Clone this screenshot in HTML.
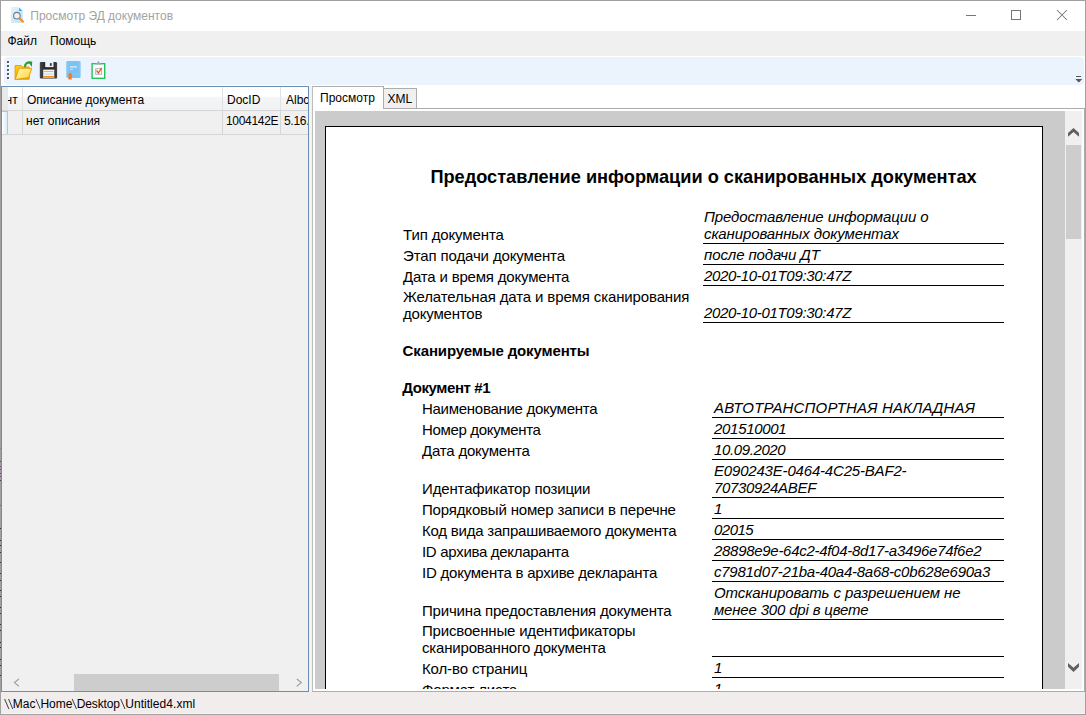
<!DOCTYPE html>
<html><head><meta charset="utf-8"><title>Просмотр ЭД документов</title>
<style>
html,body{margin:0;padding:0;}
body{width:1086px;height:715px;position:relative;overflow:hidden;background:#ffffff;font-family:"Liberation Sans", sans-serif;color:#000;}
</style></head><body>
<svg style="position:absolute;left:10px;top:6px" width="16" height="18" viewBox="0 0 16 18">
<defs><linearGradient id="ig" x1="0" y1="0" x2="1" y2="1"><stop offset="0" stop-color="#e3f3fd"/><stop offset="1" stop-color="#bfe3fa"/></linearGradient></defs>
<path d="M1 1 H9 L13 5 V17 H1 Z" fill="url(#ig)"/>
<path d="M9.2 1.8 L12.4 5 H9.2 Z" fill="#2ba4ee"/>
<circle cx="6.9" cy="9.7" r="3.3" fill="#f0f0f0" stroke="#6f7f8b" stroke-width="1.1"/>
<path d="M9.6 12.4 L13.6 16.2" stroke="#f7931e" stroke-width="2.2"/>
</svg><div style="position:absolute;left:30.3px;top:8.84px;white-space:nowrap;font-size:12px;line-height:14px;color:#a3a3a3;">Просмотр ЭД документов</div><div style="position:absolute;left:966px;top:15px;width:10px;height:1px;background:#767676"></div><div style="position:absolute;left:1011px;top:10px;width:8px;height:8px;border:1px solid #767676"></div><svg style="position:absolute;left:1056px;top:9px" width="12" height="12" viewBox="0 0 12 12">
<path d="M1 1 L11 11 M11 1 L1 11" stroke="#767676" stroke-width="1.05"/></svg><div style="position:absolute;left:1px;top:31px;width:1084px;height:25px;background:#f0f0f0"></div><div style="position:absolute;left:7.5px;top:33.84px;white-space:nowrap;font-size:12px;line-height:14px;color:#000;">Файл</div><div style="position:absolute;left:50px;top:33.84px;white-space:nowrap;font-size:12px;line-height:14px;color:#000;">Помощь</div><div style="position:absolute;left:4px;top:57px;width:1080px;height:28px;background:#ebf3fc;border-radius:4px"></div><div style="position:absolute;left:8px;top:62px;width:2px;height:2px;background:#ffffff"></div><div style="position:absolute;left:7px;top:61px;width:2px;height:2px;background:#555a60"></div><div style="position:absolute;left:8px;top:66px;width:2px;height:2px;background:#ffffff"></div><div style="position:absolute;left:7px;top:65px;width:2px;height:2px;background:#555a60"></div><div style="position:absolute;left:8px;top:70px;width:2px;height:2px;background:#ffffff"></div><div style="position:absolute;left:7px;top:69px;width:2px;height:2px;background:#555a60"></div><div style="position:absolute;left:8px;top:74px;width:2px;height:2px;background:#ffffff"></div><div style="position:absolute;left:7px;top:73px;width:2px;height:2px;background:#555a60"></div><div style="position:absolute;left:8px;top:78px;width:2px;height:2px;background:#ffffff"></div><div style="position:absolute;left:7px;top:77px;width:2px;height:2px;background:#555a60"></div><div style="position:absolute;left:1076px;top:76px;width:5px;height:1px;background:#555"></div><svg style="position:absolute;left:1075px;top:79px" width="8" height="4" viewBox="0 0 8 4"><path d="M0.3 0 H7.3 L3.8 3.5 Z" fill="#555"/></svg><svg style="position:absolute;left:14px;top:60px" width="20" height="21" viewBox="0 0 20 21">
<defs><linearGradient id="fg1" x1="0" y1="0" x2="0" y2="1"><stop offset="0" stop-color="#ffcf1f"/><stop offset="1" stop-color="#f2ae00"/></linearGradient>
<linearGradient id="fg2" x1="0" y1="0" x2="1" y2="1"><stop offset="0" stop-color="#fff7b8"/><stop offset="1" stop-color="#ffd43a"/></linearGradient></defs>
<path d="M1.1 5.6 H7.4 L8.7 7 H15.2 V19.3 H1.1 Z" fill="url(#fg1)" stroke="#e39b00" stroke-width="0.9"/>
<path d="M5 8.3 H17.8 L14.6 17.6 L1.1 19.5 Z" fill="url(#fg2)" stroke="#e39b00" stroke-width="0.9"/>
<path d="M10.9 7.2 C10.9 3.6 13.2 1.9 15.9 3.1" stroke="#3aa334" stroke-width="2.3" fill="none"/>
<path d="M13.8 1.2 L18.2 1.6 L17.9 7 Z" fill="#2f9a2c"/>
</svg><svg style="position:absolute;left:39px;top:61px" width="19" height="18" viewBox="0 0 19 18">
<defs><linearGradient id="flg" x1="0" y1="0" x2="1" y2="0"><stop offset="0" stop-color="#4a4a4a"/><stop offset="0.25" stop-color="#2b2b2b"/><stop offset="0.8" stop-color="#2b2b2b"/><stop offset="1" stop-color="#444"/></linearGradient></defs>
<path d="M1.8 0.9 H16.8 Q18.1 0.9 18.1 2.2 V16.4 Q18.1 17.4 17.1 17.4 H1.8 Q0.8 17.4 0.8 16.4 V1.9 Q0.8 0.9 1.8 0.9 Z" fill="url(#flg)"/>
<rect x="6.2" y="0.9" width="8.3" height="5.2" fill="#f2f2f2"/>
<rect x="10.9" y="2.1" width="1.8" height="2.8" fill="#3a3a3a"/>
<rect x="4.2" y="8.6" width="11.1" height="8.3" fill="#f4f4f4"/>
<rect x="5" y="10.2" width="9.5" height="0.8" fill="#9fb0c8"/>
<rect x="5" y="12.6" width="9.5" height="1" fill="#d0d3da"/>
<rect x="4.2" y="15" width="11.1" height="1.7" fill="#f5901a"/>
</svg><svg style="position:absolute;left:66px;top:60px" width="16" height="21" viewBox="0 0 16 21">
<rect x="0.3" y="0.9" width="14.3" height="17" rx="1.4" fill="#7cc3f3"/>
<path d="M1.9 1 V14.4 H13.3 V1" fill="none" stroke="#8ccbf5" stroke-width="0.8"/>
<rect x="4" y="6" width="7" height="1.7" fill="#c4e3fa"/>
<rect x="4" y="8.9" width="2.9" height="1" fill="#c4e3fa"/>
<path d="M3 15.5 L2.4 20 L4.1 19 L5.6 20 L5.3 15.5 Z" fill="#ff6a14"/>
<circle cx="4.1" cy="15" r="2.1" fill="#ff7a22"/>
</svg><svg style="position:absolute;left:91px;top:60px" width="16" height="21" viewBox="0 0 16 21">
<rect x="1.1" y="3.7" width="12.6" height="14.6" fill="#ffffff" stroke="#21c25e" stroke-width="1.4"/>
<path d="M4.4 4.5 H10.4 V3.4 L8.7 2.9 L7.4 0.8 L6.1 2.9 L4.4 3.4 Z" fill="#9aa8b4"/>
<rect x="4.7" y="8.7" width="5.9" height="5.6" fill="none" stroke="#aab4bc" stroke-width="1"/>
<path d="M5.6 10.5 L7.4 13 L10.6 7.8" fill="none" stroke="#f2592a" stroke-width="1.4"/>
</svg><div style="position:absolute;left:1px;top:86px;width:308px;height:606px;box-sizing:border-box;border:1px solid #6a8eb4;background:#f0f0f0"></div><div style="position:absolute;left:2px;top:87px;width:306px;height:23px;background:linear-gradient(#ffffff 0px,#ffffff 9px,#f4f5f7 11px,#f0f1f3 23px)"></div><div style="position:absolute;left:2px;top:87px;width:6px;height:23px;background:#e9e9eb"></div><div style="position:absolute;left:2px;top:110px;width:306px;height:1px;background:#d5d5d5"></div><div style="position:absolute;left:22px;top:87px;width:1px;height:23px;background:#e2e2e4"></div><div style="position:absolute;left:222px;top:87px;width:1px;height:23px;background:#e2e2e4"></div><div style="position:absolute;left:280px;top:87px;width:1px;height:23px;background:#e2e2e4"></div><div style="position:absolute;left:8px;top:87px;width:14px;height:23px;overflow:hidden"><div style="position:absolute;left:-2.5px;top:5.84px;white-space:nowrap;font-size:12px;line-height:14px;color:#000;">нт</div></div><div style="position:absolute;left:27px;top:92.84px;white-space:nowrap;font-size:12px;line-height:14px;color:#000;">Описание документа</div><div style="position:absolute;left:227px;top:92.84px;white-space:nowrap;font-size:12px;line-height:14px;color:#000;">DocID</div><div style="position:absolute;left:286px;top:92.84px;white-space:nowrap;font-size:12px;line-height:14px;color:#000;width:22px;overflow:hidden">Albc</div><div style="position:absolute;left:2px;top:111px;width:306px;height:23px;background:#f0f0f0"></div><div style="position:absolute;left:2px;top:111px;width:6px;height:24px;box-sizing:border-box;border:1px solid #8fd2fb;border-left:none;background:linear-gradient(90deg,#ffffff,#d9edf9)"></div><div style="position:absolute;left:2px;top:134px;width:306px;height:1px;background:#d6d6d6"></div><div style="position:absolute;left:22px;top:111px;width:1px;height:23px;background:#d6d6d6"></div><div style="position:absolute;left:222px;top:111px;width:1px;height:23px;background:#d6d6d6"></div><div style="position:absolute;left:280px;top:111px;width:1px;height:23px;background:#d6d6d6"></div><div style="position:absolute;left:26px;top:113.84px;white-space:nowrap;font-size:12px;line-height:14px;color:#000;">нет описания</div><div style="position:absolute;left:226px;top:113.84px;white-space:nowrap;font-size:12px;line-height:14px;color:#000;letter-spacing:-0.3px">1004142E</div><div style="position:absolute;left:284px;top:113.84px;white-space:nowrap;font-size:12px;line-height:14px;color:#000;width:24px;overflow:hidden;letter-spacing:-0.3px">5.16.</div><div style="position:absolute;left:2px;top:674px;width:306px;height:17px;background:#f0f0f0"></div><div style="position:absolute;left:74px;top:674px;width:205px;height:17px;background:#cdcdcd"></div><svg style="position:absolute;left:10px;top:675px" width="14" height="14" viewBox="10 675 14 14"><path d="M18.9 679 L14.4 682.6 L18.9 686.2" fill="none" stroke="#a0a0a0" stroke-width="1.2"/></svg><svg style="position:absolute;left:292px;top:675px" width="14" height="14" viewBox="292 675 14 14"><path d="M296.8 679 L301.3 682.6 L296.8 686.2" fill="none" stroke="#a0a0a0" stroke-width="1.2"/></svg><div style="position:absolute;left:309px;top:86px;width:3px;height:606px;background:#f2f2f2"></div><div style="position:absolute;left:312px;top:108px;width:773px;height:584px;box-sizing:border-box;border:1px solid #adadad;border-left-color:#bdbdbd;background:#ffffff"></div><div style="position:absolute;left:383px;top:88px;width:34px;height:21px;box-sizing:border-box;border:1px solid #adadad;background:#f0f0f0"></div><div style="position:absolute;left:387.5px;top:91.84px;white-space:nowrap;font-size:12px;line-height:14px;color:#000;">XML</div><div style="position:absolute;left:312px;top:86px;width:72px;height:23px;box-sizing:border-box;border:1px solid #adadad;border-left-color:#bdbdbd;border-bottom:none;background:#ffffff"></div><div style="position:absolute;left:320px;top:90.84px;white-space:nowrap;font-size:12px;line-height:14px;color:#000;">Просмотр</div><div style="position:absolute;left:315px;top:111px;width:750px;height:578px;background:#cbcbcb"></div><div style="position:absolute;left:1065px;top:111px;width:17px;height:578px;background:#f0f0f0"></div><div style="position:absolute;left:1066px;top:145px;width:15px;height:94px;background:#cdcdcd"></div><svg style="position:absolute;left:1065px;top:125px" width="17" height="14" viewBox="1065 125 17 14"><path d="M1068 132.9 L1073.5 127.9 L1079 132.9 V136.8 L1073.5 132.1 L1068 136.8 Z" fill="#606060"/></svg><svg style="position:absolute;left:1065px;top:660px" width="17" height="14" viewBox="1065 660 17 14"><path d="M1068 662.9 L1073.5 667.7 L1079 662.9 V666.8 L1073.5 672 L1068 666.8 Z" fill="#606060"/></svg><div style="position:absolute;left:315px;top:111px;width:750px;height:578px;overflow:hidden"><div style="position:absolute;left:-315px;top:-111px;width:1086px;height:715px"><div style="position:absolute;left:325px;top:126px;width:718px;height:563px;box-sizing:border-box;border:1px solid #000;border-bottom:none;background:#fff"></div><div style="position:absolute;left:430.4px;top:167.19px;white-space:nowrap;font-size:18.2px;line-height:21px;color:#000;font-weight:bold">Предоставление информации о сканированных документах</div><div style="position:absolute;left:403px;top:226.30px;white-space:nowrap;font-size:15px;line-height:17px;color:#000;letter-spacing:-0.125px">Тип документа</div><div style="position:absolute;left:704px;top:208.30px;white-space:nowrap;font-size:15px;line-height:17px;color:#000;font-style:italic;letter-spacing:-0.119px">Предоставление информации о</div><div style="position:absolute;left:704px;top:225.30px;white-space:nowrap;font-size:15px;line-height:17px;color:#000;font-style:italic;letter-spacing:-0.109px">сканированных документах</div><div style="position:absolute;left:703px;top:243px;width:301px;height:1px;background:#000"></div><div style="position:absolute;left:403px;top:247.30px;white-space:nowrap;font-size:15px;line-height:17px;color:#000;letter-spacing:-0.125px">Этап подачи документа</div><div style="position:absolute;left:704px;top:246.30px;white-space:nowrap;font-size:15px;line-height:17px;color:#000;font-style:italic;letter-spacing:-0.107px">после подачи ДТ</div><div style="position:absolute;left:703px;top:264px;width:301px;height:1px;background:#000"></div><div style="position:absolute;left:403px;top:268.30px;white-space:nowrap;font-size:15px;line-height:17px;color:#000;letter-spacing:-0.186px">Дата и время документа</div><div style="position:absolute;left:704px;top:267.30px;white-space:nowrap;font-size:15px;line-height:17px;color:#000;font-style:italic;letter-spacing:-0.321px">2020-10-01T09:30:47Z</div><div style="position:absolute;left:703px;top:285px;width:301px;height:1px;background:#000"></div><div style="position:absolute;left:403px;top:288.30px;white-space:nowrap;font-size:15px;line-height:17px;color:#000;letter-spacing:-0.131px">Желательная дата и время сканирования</div><div style="position:absolute;left:403px;top:305.30px;white-space:nowrap;font-size:15px;line-height:17px;color:#000;letter-spacing:-0.178px">документов</div><div style="position:absolute;left:704px;top:304.30px;white-space:nowrap;font-size:15px;line-height:17px;color:#000;font-style:italic;letter-spacing:-0.321px">2020-10-01T09:30:47Z</div><div style="position:absolute;left:703px;top:322px;width:301px;height:1px;background:#000"></div><div style="position:absolute;left:402.6px;top:342.30px;white-space:nowrap;font-size:15px;line-height:17px;color:#000;font-weight:bold;letter-spacing:-0.13px">Сканируемые документы</div><div style="position:absolute;left:402.3px;top:379.30px;white-space:nowrap;font-size:15px;line-height:17px;color:#000;font-weight:bold;letter-spacing:-0.42px">Документ #1</div><div style="position:absolute;left:422px;top:400.30px;white-space:nowrap;font-size:15px;line-height:17px;color:#000;letter-spacing:-0.276px">Наименование документа</div><div style="position:absolute;left:714px;top:399.30px;white-space:nowrap;font-size:15px;line-height:17px;color:#000;font-style:italic;letter-spacing:0.156px">АВТОТРАНСПОРТНАЯ НАКЛАДНАЯ</div><div style="position:absolute;left:712px;top:417px;width:292px;height:1px;background:#000"></div><div style="position:absolute;left:422px;top:421.30px;white-space:nowrap;font-size:15px;line-height:17px;color:#000;letter-spacing:-0.329px">Номер документа</div><div style="position:absolute;left:714px;top:420.30px;white-space:nowrap;font-size:15px;line-height:17px;color:#000;font-style:italic;letter-spacing:-0.300px">201510001</div><div style="position:absolute;left:712px;top:438px;width:292px;height:1px;background:#000"></div><div style="position:absolute;left:422px;top:442.30px;white-space:nowrap;font-size:15px;line-height:17px;color:#000;letter-spacing:-0.200px">Дата документа</div><div style="position:absolute;left:714px;top:441.30px;white-space:nowrap;font-size:15px;line-height:17px;color:#000;font-style:italic;letter-spacing:-0.378px">10.09.2020</div><div style="position:absolute;left:712px;top:459px;width:292px;height:1px;background:#000"></div><div style="position:absolute;left:422px;top:480.30px;white-space:nowrap;font-size:15px;line-height:17px;color:#000;letter-spacing:-0.140px">Идентафикатор позиции</div><div style="position:absolute;left:714px;top:462.30px;white-space:nowrap;font-size:15px;line-height:17px;color:#000;font-style:italic;letter-spacing:-0.183px">E090243E-0464-4C25-BAF2-</div><div style="position:absolute;left:714px;top:479.30px;white-space:nowrap;font-size:15px;line-height:17px;color:#000;font-style:italic;letter-spacing:-0.327px">70730924ABEF</div><div style="position:absolute;left:712px;top:497px;width:292px;height:1px;background:#000"></div><div style="position:absolute;left:422px;top:501.30px;white-space:nowrap;font-size:15px;line-height:17px;color:#000;letter-spacing:-0.169px">Порядковый номер записи в перечне</div><div style="position:absolute;left:714px;top:500.30px;white-space:nowrap;font-size:15px;line-height:17px;color:#000;font-style:italic;letter-spacing:-0.150px">1</div><div style="position:absolute;left:712px;top:518px;width:292px;height:1px;background:#000"></div><div style="position:absolute;left:422px;top:522.30px;white-space:nowrap;font-size:15px;line-height:17px;color:#000;letter-spacing:-0.222px">Код вида запрашиваемого документа</div><div style="position:absolute;left:714px;top:521.30px;white-space:nowrap;font-size:15px;line-height:17px;color:#000;font-style:italic;letter-spacing:-0.525px">02015</div><div style="position:absolute;left:712px;top:539px;width:292px;height:1px;background:#000"></div><div style="position:absolute;left:422px;top:543.30px;white-space:nowrap;font-size:15px;line-height:17px;color:#000;letter-spacing:-0.300px">ID архива декларанта</div><div style="position:absolute;left:714px;top:542.30px;white-space:nowrap;font-size:15px;line-height:17px;color:#000;font-style:italic;letter-spacing:-0.291px">28898e9e-64c2-4f04-8d17-a3496e74f6e2</div><div style="position:absolute;left:712px;top:560px;width:292px;height:1px;background:#000"></div><div style="position:absolute;left:422px;top:564.30px;white-space:nowrap;font-size:15px;line-height:17px;color:#000;letter-spacing:-0.226px">ID документа в архиве декларанта</div><div style="position:absolute;left:714px;top:563.30px;white-space:nowrap;font-size:15px;line-height:17px;color:#000;font-style:italic;letter-spacing:-0.257px">c7981d07-21ba-40a4-8a68-c0b628e690a3</div><div style="position:absolute;left:712px;top:581px;width:292px;height:1px;background:#000"></div><div style="position:absolute;left:422px;top:602.30px;white-space:nowrap;font-size:15px;line-height:17px;color:#000;letter-spacing:-0.184px">Причина предоставления документа</div><div style="position:absolute;left:714px;top:584.30px;white-space:nowrap;font-size:15px;line-height:17px;color:#000;font-style:italic;letter-spacing:-0.079px">Отсканировать с разрешением не</div><div style="position:absolute;left:714px;top:601.30px;white-space:nowrap;font-size:15px;line-height:17px;color:#000;font-style:italic;letter-spacing:-0.175px">менее 300 dpi в цвете</div><div style="position:absolute;left:712px;top:619px;width:292px;height:1px;background:#000"></div><div style="position:absolute;left:422px;top:622.30px;white-space:nowrap;font-size:15px;line-height:17px;color:#000;letter-spacing:-0.184px">Присвоенные идентификаторы</div><div style="position:absolute;left:422px;top:639.30px;white-space:nowrap;font-size:15px;line-height:17px;color:#000;letter-spacing:-0.178px">сканированного документа</div><div style="position:absolute;left:712px;top:656px;width:292px;height:1px;background:#000"></div><div style="position:absolute;left:422px;top:660.30px;white-space:nowrap;font-size:15px;line-height:17px;color:#000;letter-spacing:-0.131px">Кол-во страниц</div><div style="position:absolute;left:714px;top:659.30px;white-space:nowrap;font-size:15px;line-height:17px;color:#000;font-style:italic;letter-spacing:-0.150px">1</div><div style="position:absolute;left:712px;top:677px;width:292px;height:1px;background:#000"></div><div style="position:absolute;left:422px;top:681.30px;white-space:nowrap;font-size:15px;line-height:17px;color:#000;letter-spacing:-0.170px">Формат листа</div><div style="position:absolute;left:714px;top:680.30px;white-space:nowrap;font-size:15px;line-height:17px;color:#000;font-style:italic;letter-spacing:-0.150px">1</div><div style="position:absolute;left:712px;top:698px;width:292px;height:1px;background:#000"></div></div></div><div style="position:absolute;left:1px;top:692px;width:1084px;height:22px;background:#f0edec"></div><div style="position:absolute;left:1px;top:713px;width:1084px;height:1px;background:#f9f7f7"></div><div style="position:absolute;left:12.8px;top:696.84px;white-space:nowrap;font-size:12px;line-height:14px;color:#000;">Mac</div><div style="position:absolute;left:40.4px;top:696.84px;white-space:nowrap;font-size:12px;line-height:14px;color:#000;">Home</div><div style="position:absolute;left:76.8px;top:696.84px;white-space:nowrap;font-size:12px;line-height:14px;color:#000;letter-spacing:-0.15px">Desktop</div><div style="position:absolute;left:125.2px;top:696.84px;white-space:nowrap;font-size:12px;line-height:14px;color:#000;letter-spacing:0.05px">Untitled4.xml</div><svg style="position:absolute;left:0;top:694px" width="130" height="20" viewBox="0 694 130 20"><path d="M4.6 699 L8.9 709 M8.6 699 L12.8 709 M35.9 699 L40.2 709 M72.2 699 L76.5 709 M120.7 699 L125 709" stroke="#2a2a2a" stroke-width="0.9" fill="none"/></svg><div style="position:absolute;left:0px;top:0px;width:1086px;height:1px;background:#a0a0a0"></div><div style="position:absolute;left:0px;top:0px;width:1px;height:715px;background:#a0a0a0"></div><div style="position:absolute;left:1085px;top:0px;width:1px;height:715px;background:#a0a0a0"></div><div style="position:absolute;left:0px;top:714px;width:1086px;height:1px;background:#a0a0a0"></div><div style="position:absolute;left:0px;top:448px;width:1px;height:1px;background:#888"></div><div style="position:absolute;left:0px;top:461px;width:1px;height:1px;background:#555"></div><div style="position:absolute;left:0px;top:466px;width:1px;height:1px;background:#7a4a8a"></div><div style="position:absolute;left:0px;top:469px;width:1px;height:1px;background:#7a4a8a"></div><div style="position:absolute;left:0px;top:473px;width:1px;height:1px;background:#7a4a8a"></div><div style="position:absolute;left:0px;top:476px;width:1px;height:1px;background:#7a4a8a"></div><div style="position:absolute;left:0px;top:480px;width:1px;height:1px;background:#444"></div><div style="position:absolute;left:0px;top:505px;width:1px;height:1px;background:#5a7a5a"></div><div style="position:absolute;left:0px;top:528px;width:1px;height:1px;background:#333"></div><div style="position:absolute;left:0px;top:540px;width:1px;height:1px;background:#333"></div><div style="position:absolute;left:0px;top:545px;width:1px;height:1px;background:#333"></div><div style="position:absolute;left:0px;top:552px;width:1px;height:1px;background:#333"></div><div style="position:absolute;left:0px;top:562px;width:1px;height:1px;background:#333"></div><div style="position:absolute;left:0px;top:573px;width:1px;height:1px;background:#333"></div><div style="position:absolute;left:0px;top:580px;width:1px;height:1px;background:#333"></div><div style="position:absolute;left:0px;top:590px;width:1px;height:1px;background:#333"></div><div style="position:absolute;left:0px;top:596px;width:1px;height:1px;background:#333"></div><div style="position:absolute;left:0px;top:607px;width:1px;height:1px;background:#333"></div><div style="position:absolute;left:0px;top:613px;width:1px;height:1px;background:#333"></div><div style="position:absolute;left:0px;top:624px;width:1px;height:1px;background:#333"></div><div style="position:absolute;left:0px;top:630px;width:1px;height:1px;background:#333"></div><div style="position:absolute;left:0px;top:642px;width:1px;height:1px;background:#333"></div><div style="position:absolute;left:0px;top:647px;width:1px;height:1px;background:#333"></div><div style="position:absolute;left:0px;top:659px;width:1px;height:1px;background:#333"></div><div style="position:absolute;left:0px;top:665px;width:1px;height:1px;background:#333"></div><div style="position:absolute;left:0px;top:675px;width:1px;height:1px;background:#333"></div>
</body></html>
